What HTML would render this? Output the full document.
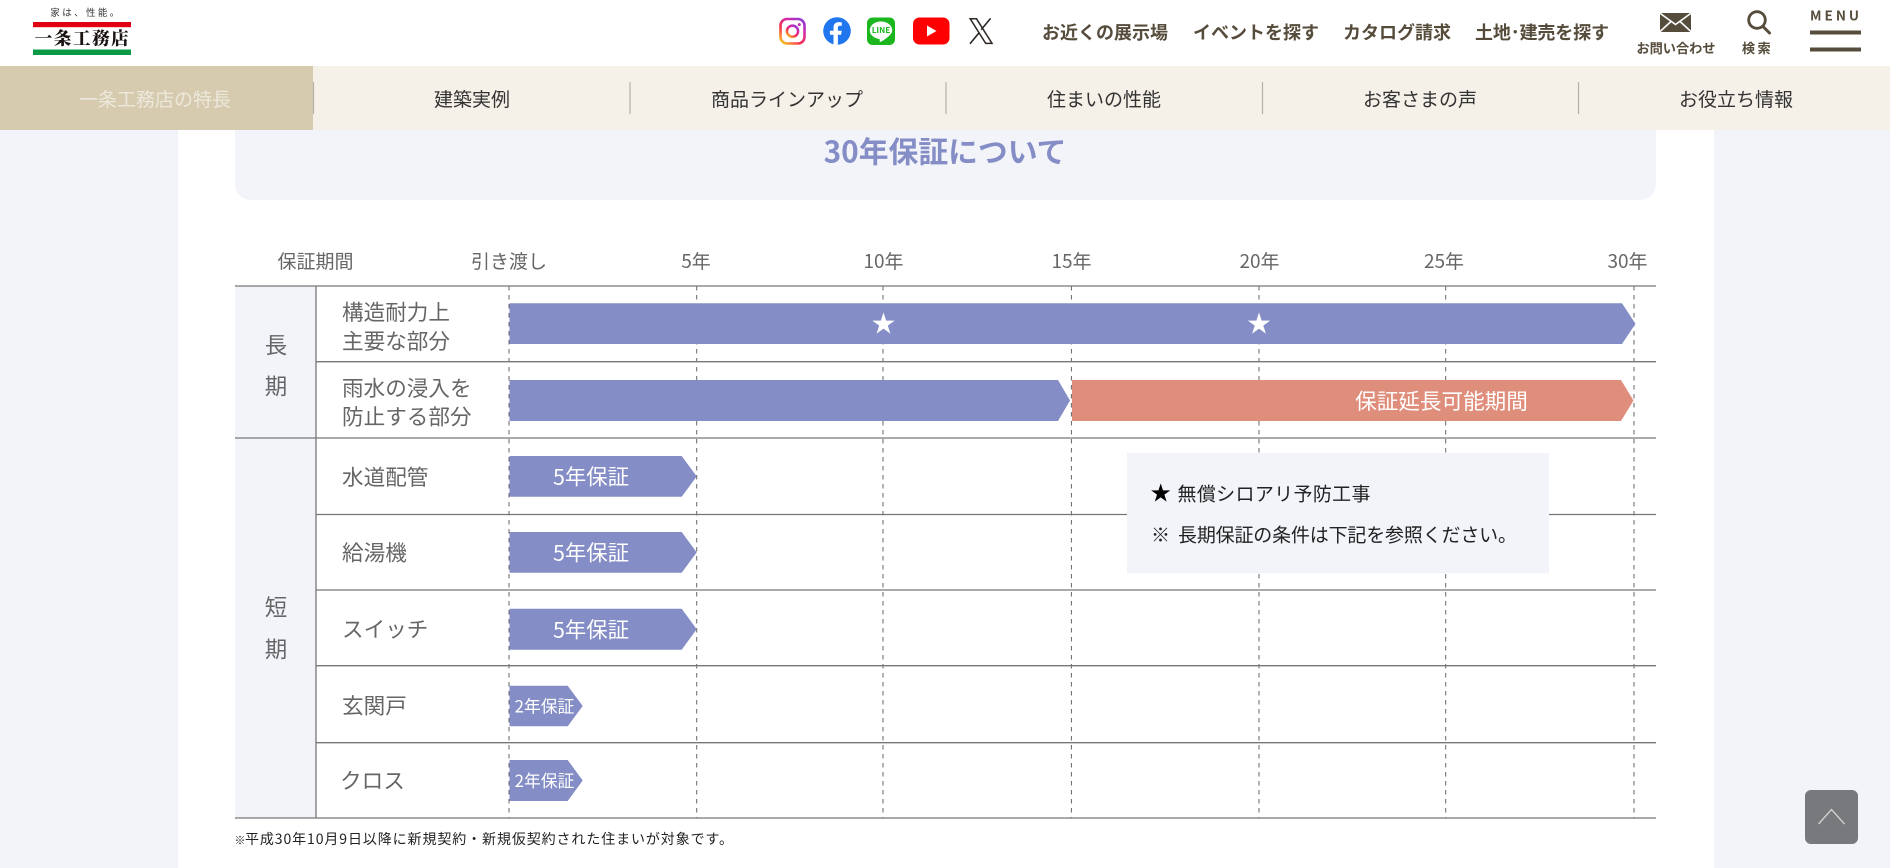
<!DOCTYPE html>
<html lang="ja">
<head>
<meta charset="utf-8">
<title>30年保証について</title>
<style>
html,body{margin:0;padding:0;width:1890px;height:868px;overflow:hidden;background:#f2f4f9}
svg{display:block;position:absolute;left:0;top:0}
text{font-family:"Noto Sans CJK JP","Liberation Sans",sans-serif;dominant-baseline:central}
.nav{font-size:19px;fill:#333;text-anchor:middle}
.top{font-size:18px;fill:#564c3c;font-weight:700;text-anchor:start}
.yr{font-size:19px;fill:#666;text-anchor:middle}
.lb{font-size:21.6px;fill:#666}
.big{font-size:22.5px;fill:#666;text-anchor:middle}
.w{fill:#fff;text-anchor:middle}
.rl{stroke:#777;stroke-width:1.3}
.dl{stroke:#666;stroke-width:1;stroke-dasharray:4.5 4.5}
</style>
</head>
<body>
<svg width="1890" height="868" viewBox="0 0 1890 868" xmlns="http://www.w3.org/2000/svg">
<defs>
<linearGradient id="ig" x1="0.1" y1="1" x2="0.9" y2="0">
<stop offset="0" stop-color="#fdc11f"/><stop offset=".35" stop-color="#f5334e"/><stop offset=".7" stop-color="#d42aa8"/><stop offset="1" stop-color="#8e3bd9"/>
</linearGradient>
</defs>
<!-- page -->
<rect x="0" y="0" width="1890" height="868" fill="#f2f4f9"/>
<rect x="178" y="130" width="1536" height="738" fill="#fff"/>
<rect x="0" y="0" width="1890" height="66" fill="#fff"/>
<!-- logo -->
<text x="86" y="12" font-size="9.5" fill="#333" text-anchor="middle" letter-spacing="2.4">家は、性能。</text>
<rect x="33" y="22" width="98" height="5.2" fill="#e00012"/>
<rect x="33" y="49.5" width="98" height="5.5" fill="#0a9a44"/>
<text x="82.5" y="38" font-size="17.5" font-weight="900" fill="#1a1311" text-anchor="middle" letter-spacing="1.6" style="font-family:'Noto Serif CJK SC','Noto Sans CJK JP',serif">一条工務店</text>
<!-- social -->
<rect x="780.5" y="19" width="24" height="24.5" rx="6.5" fill="none" stroke="url(#ig)" stroke-width="2.6"/>
<circle cx="792.5" cy="31.2" r="5.6" fill="none" stroke="url(#ig)" stroke-width="2.5"/>
<circle cx="799.3" cy="24.6" r="1.5" fill="#c92fb0"/>
<circle cx="837" cy="31" r="13.8" fill="#1f76ee"/>
<path d="M833.5 44.7V34.8h-3.6v-4.1h3.6v-3.1c0-3.6 2.1-5.5 5.3-5.5 1.5 0 3 .3 3 .3v3.4h-1.7c-1.7 0-2.2 1-2.2 2.1v2.8h3.8l-.6 4.1h-3.2v9.9z" fill="#fff"/>
<rect x="867" y="17.5" width="28" height="27.5" rx="5.5" fill="#1cb71f"/>
<path d="M881 21.5c-6.2 0-11.2 3.9-11.2 8.8 0 4.4 3.9 8 9.3 8.7.9.2.7 1.1.6 1.9-.1.9.3 1.2 1.3.7 1.9-1 6.5-4 8.7-6.4 1.6-1.6 2.5-3 2.5-4.9 0-4.9-5-8.8-11.2-8.8z" fill="#fff"/>
<text x="881" y="30" font-size="8.2" font-weight="700" fill="#1cb71f" text-anchor="middle">LINE</text>
<rect x="913" y="17.5" width="36.5" height="27" rx="6.5" fill="#fe0000"/>
<path d="M927 25.5v11l9.5-5.5z" fill="#fff"/>
<path d="M970.2 18.8h6.3L992 43.4h-6.3z" fill="none" stroke="#2c2622" stroke-width="1.5"/>
<path d="M990.6 18.4L981.2 29.6M979.2 32.6L970 43.8" fill="none" stroke="#2c2622" stroke-width="1.6"/>
<!-- top links -->
<text class="top" x="1042" y="32">お近くの展示場</text>
<text class="top" x="1193" y="32">イベントを探す</text>
<text class="top" x="1343" y="32">カタログ請求</text>
<text class="top" x="1475" y="32" textLength="134">土地･建売を探す</text>
<!-- mail -->
<rect x="1660" y="13" width="31" height="19" fill="#564c3c"/>
<path d="M1659 12.5l16.5 12 16.5-12M1659 32.5l12.5-11.5M1692 32.5l-12.5-11.5" fill="none" stroke="#fff" stroke-width="1.6"/>
<text x="1676" y="47.5" font-size="13.2" font-weight="700" fill="#564c3c" text-anchor="middle">お問い合わせ</text>
<!-- search -->
<circle cx="1757" cy="20" r="8.3" fill="none" stroke="#564c3c" stroke-width="2.8"/>
<path d="M1763 26.5l6.5 6.5" stroke="#564c3c" stroke-width="3" stroke-linecap="round"/>
<text x="1757.5" y="47.5" font-size="13.2" font-weight="700" fill="#564c3c" text-anchor="middle" letter-spacing="2.5">検索</text>
<!-- menu -->
<text x="1810" y="14.5" font-size="13.5" font-weight="700" fill="#564c3c" letter-spacing="3">MENU</text>
<rect x="1810" y="30.5" width="51" height="4" fill="#564c3c"/>
<rect x="1810" y="47.5" width="51" height="4" fill="#564c3c"/>
<!-- nav -->
<rect x="0" y="66" width="1890" height="64" fill="#f5f0e8"/>
<rect x="0" y="66" width="313" height="64" fill="#d6cbae"/>
<g stroke="#b5b2ab" stroke-width="1.2">
<path d="M313.5 82v32M630 82v32M946 82v32M1262.5 82v32M1578.5 82v32"/>
</g>
<text class="nav" x="155" y="98.5" style="fill:#ece8dc">一条工務店の特長</text>
<text class="nav" x="472" y="98.5">建築実例</text>
<text class="nav" x="787" y="98.5">商品ラインアップ</text>
<text class="nav" x="1104" y="98.5">住まいの性能</text>
<text class="nav" x="1420" y="98.5">お客さまの声</text>
<text class="nav" x="1736" y="98.5">お役立ち情報</text>
<!-- title box -->
<path d="M235 130H1656V184a16 16 0 0 1-16 16H251a16 16 0 0 1-16-16z" fill="#f2f4f9"/>
<text x="945" y="149.5" font-size="29.8" font-weight="700" fill="#848dc5" text-anchor="middle">30年保証について</text>
<!-- chart header -->
<text class="yr" x="315.5" y="260.5">保証期間</text>
<text class="yr" x="509" y="260.5">引き渡し</text>
<text class="yr" x="696" y="260.5">5年</text>
<text class="yr" x="883.5" y="260.5">10年</text>
<text class="yr" x="1071.5" y="260.5">15年</text>
<text class="yr" x="1259.5" y="260.5">20年</text>
<text class="yr" x="1444" y="260.5">25年</text>
<text class="yr" x="1627.5" y="260.5">30年</text>
<!-- left cells -->
<rect x="235" y="286" width="81" height="532" fill="#f2f4f9"/>
<!-- dashed lines -->
<path class="dl" d="M509 286V818M696.7 286V818M883 286V818M1071.4 286V818M1259 286V818M1445.7 286V818M1634 286V818"/>
<!-- row lines -->
<path class="rl" d="M235 286H1656M316 361.7H1656M235 438H1656M316 514.5H1656M316 590H1656M316 665.7H1656M316 742.7H1656M235 818H1656M316 286V818" fill="none"/>
<!-- bars -->
<path d="M509.5 303.3H1622L1635.5 323.7L1622 344H509.5z" fill="#848dc5"/>
<path d="M509.5 380H1058L1070 400.5L1058 421H509.5z" fill="#848dc5"/>
<path d="M1072 380H1621L1633.5 400.5L1621 421H1072z" fill="#e08e7c"/>
<path d="M509.5 456H681.7L696.7 476.4L681.7 496.7H509.5z" fill="#848dc5"/>
<path d="M509.5 532H681.7L696.7 552.4L681.7 572.7H509.5z" fill="#848dc5"/>
<path d="M509.5 608.7H681.7L696.7 629.2L681.7 649.7H509.5z" fill="#848dc5"/>
<path d="M509.5 685.7H567.7L582.7 706L567.7 726.3H509.5z" fill="#848dc5"/>
<path d="M509.5 760H567.7L582.7 780.5L567.7 801H509.5z" fill="#848dc5"/>
<text class="w" x="883.5" y="323.5" font-size="29" style="font-family:'DejaVu Sans',sans-serif">★</text>
<text class="w" x="1259" y="323.5" font-size="29" style="font-family:'DejaVu Sans',sans-serif">★</text>
<text class="w" x="1441.5" y="400.5" font-size="21.6">保証延長可能期間</text>
<text class="w" x="591" y="476" font-size="21.4">5年保証</text>
<text class="w" x="591" y="552" font-size="21.4">5年保証</text>
<text class="w" x="591" y="629" font-size="21.4">5年保証</text>
<text class="w" x="544.5" y="705.5" font-size="16.8">2年保証</text>
<text class="w" x="544.5" y="780" font-size="16.8">2年保証</text>
<!-- labels -->
<text class="big" x="276" y="344.5">長</text>
<text class="big" x="276" y="385.5">期</text>
<text class="big" x="276" y="606.5">短</text>
<text class="big" x="276" y="648.5">期</text>
<text class="lb" x="342" y="311.5">構造耐力上</text>
<text class="lb" x="342" y="340.5">主要な部分</text>
<text class="lb" x="342" y="387.5">雨水の浸入を</text>
<text class="lb" x="342" y="416">防止する部分</text>
<text class="lb" x="342" y="476.5">水道配管</text>
<text class="lb" x="342" y="552.2">給湯機</text>
<text class="lb" x="342" y="628.5">スイッチ</text>
<text class="lb" x="342" y="705">玄関戸</text>
<text class="lb" x="340" y="780">クロス</text>
<!-- note box -->
<rect x="1127" y="453" width="422" height="120.5" fill="#f2f4f9"/>
<text x="1149.5" y="493" font-size="25" fill="#000" style="font-family:'DejaVu Sans',sans-serif">★</text>
<text x="1177.5" y="493" font-size="19" fill="#222" textLength="193">無償シロアリ予防工事</text>
<text x="1151" y="534" font-size="19" fill="#222">※</text>
<text x="1178" y="534" font-size="19" fill="#222" textLength="339">長期保証の条件は下記を参照ください。</text>
<!-- footnote -->
<text x="234.5" y="840" font-size="11" font-weight="700" fill="#222">※</text>
<text x="245" y="839" font-size="14" fill="#222" textLength="488">平成30年10月9日以降に新規契約・新規仮契約された住まいが対象です。</text>
<!-- back to top -->
<rect x="1805" y="790" width="53" height="54" rx="6" fill="#77797d"/>
<path d="M1818.5 824L1831.5 809.5L1844.5 824" fill="none" stroke="#d0d0d0" stroke-width="1.4"/>
</svg>
</body>
</html>
